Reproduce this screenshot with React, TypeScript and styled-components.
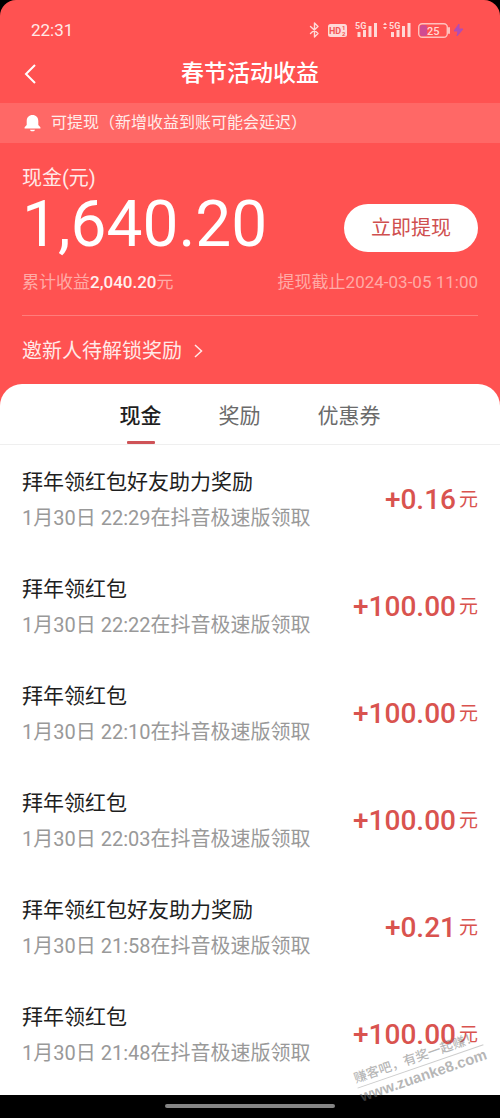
import React, { useState } from "react";
import styled, { createGlobalStyle } from "styled-components";

const GlobalStyle = createGlobalStyle`
  * { box-sizing: border-box; }
  html, body { margin: 0; background: #000; }
  body { font-family: Roboto, "Noto Sans CJK SC", sans-serif; }
  button { font-family: inherit; border: 0; padding: 0; background: none; cursor: pointer; }
  h1, h2, p, ul { margin: 0; padding: 0; font-weight: 400; }
`;

const Screen = styled.div`
  position: relative;
  display: flex;
  flex-direction: column;
  min-height: 100vh;
  overflow: hidden;
`;

const Hero = styled.header`
  background: #ff5251;
  color: #fff;
  border-radius: 16px 16px 0 0;
`;

const StatusBar = styled.div`
  display: flex;
  justify-content: space-between;
  align-items: center;
  height: 44px;
  padding: 16px 36px 0 31px;
  font-size: 17px;
  line-height: 26px;
  color: #ffe9e8;
`;

const StatusIcons = styled.svg`
  display: block;
  flex: none;
`;

const NavBar = styled.div`
  display: grid;
  grid-template-columns: 40px 1fr 40px;
  align-items: center;
  height: 59px;
  padding: 0 16px;
`;

const BackButton = styled.button`
  display: flex;
  padding-left: 6px;
  color: #fff;
`;

const PageTitle = styled.h1`
  text-align: center;
  font-size: 23px;
  line-height: 32px;
  font-weight: 500;
`;

const Notice = styled.div`
  display: flex;
  align-items: center;
  gap: 10px;
  height: 40px;
  padding: 0 24px;
  background: #ff6866;
  font-size: 16px;
  line-height: 24px;
  color: #ffecea;
`;

const Summary = styled.section`
  padding: 20px 22px 0;
`;

const SummaryLabel = styled.p`
  font-size: 20px;
  line-height: 30px;
  color: #ffe9e8;
`;

const BalanceRow = styled.div`
  display: flex;
  justify-content: space-between;
  align-items: flex-start;
  height: 68px;
`;

const Balance = styled.p`
  font-size: 64px;
  line-height: 64px;
`;

const WithdrawButton = styled.button`
  width: 134px;
  height: 48px;
  margin-top: 11px;
  border-radius: 24px;
  background: #fff;
  color: #cf4f4f;
  font-size: 20px;
  line-height: 48px;
`;

const TotalsRow = styled.div`
  display: flex;
  justify-content: space-between;
  margin-top: 9px;
  padding-bottom: 20px;
  border-bottom: 1px solid #ff7d7b;
  font-size: 17px;
  line-height: 25px;
  color: #ffaaa6;
`;

const Total = styled.strong`
  font-weight: 500;
  color: #fff0ef;
`;

const InviteLink = styled.a`
  display: flex;
  align-items: center;
  gap: 12px;
  height: 68px;
  padding-top: 2px;
  font-size: 20px;
  line-height: 30px;
  color: #ffe9e8;
  text-decoration: none;
`;

const SheetBackdrop = styled.main`
  display: flex;
  flex: 1;
  background: #ff5251;
`;

const Sheet = styled.div`
  flex: 1;
  min-width: 0;
  border-radius: 22px 22px 0 0;
  background: #fff;
`;

const Tabs = styled.div`
  display: flex;
  justify-content: center;
  gap: 57px;
  height: 61px;
  border-bottom: 1px solid #efefef;
`;

const Tab = styled.button<{ $active: boolean }>`
  display: flex;
  flex-direction: column;
  align-items: center;
  justify-content: space-between;
  padding-top: 16px;
  font-size: 21px;
  line-height: 32px;
  font-weight: ${(p) => (p.$active ? 500 : 400)};
  color: ${(p) => (p.$active ? "#1e1e1e" : "#6b6b6b")};

  &::after {
    content: "";
    width: 28px;
    height: 3px;
    border-radius: 1px;
    background: ${(p) => (p.$active ? "#cf5357" : "transparent")};
  }
`;

const RecordList = styled.ul`
  padding-top: 1px;
  list-style: none;
`;

const Record = styled.li`
  display: flex;
  justify-content: space-between;
  align-items: center;
  height: 107px;
  padding: 0 22px;
`;

const RecordTitle = styled.h2`
  font-size: 21px;
  line-height: 36px;
  color: #1e1e1e;
`;

const RecordTime = styled.p`
  font-size: 20px;
  line-height: 36px;
  color: #999;
`;

const Amount = styled.p`
  display: flex;
  align-items: center;
  gap: 3px;
  font-size: 28px;
  line-height: 36px;
  font-weight: 500;
  color: #d9534f;
`;

const Unit = styled.span`
  font-size: 19px;
  font-weight: 400;
`;

const SystemBar = styled.footer`
  display: flex;
  justify-content: center;
  height: 23px;
  padding-top: 9px;
  background: #000;
`;

const HomeIndicator = styled.div`
  width: 34%;
  height: 4px;
  border-radius: 2px;
  background: #858585;
`;

const Watermark = styled.div`
  position: absolute;
  right: 13px;
  bottom: 33px;
  transform: rotate(-19deg);
  font-size: 13px;
  line-height: 18px;
  font-weight: 500;
  color: rgba(110, 110, 110, 0.5);
  white-space: nowrap;
  pointer-events: none;
`;

const WatermarkName = styled.div`
  border-bottom: 1px solid rgba(110, 110, 110, 0.35);
`;

const WatermarkSite = styled.div`
  font-family: "Liberation Sans", sans-serif;
  font-size: 15px;
  font-weight: 700;
`;

const records = [
  { title: "拜年领红包好友助力奖励", time: "22:29", amount: "+0.16" },
  { title: "拜年领红包", time: "22:22", amount: "+100.00" },
  { title: "拜年领红包", time: "22:10", amount: "+100.00" },
  { title: "拜年领红包", time: "22:03", amount: "+100.00" },
  { title: "拜年领红包好友助力奖励", time: "21:58", amount: "+0.21" },
  { title: "拜年领红包", time: "21:48", amount: "+100.00" },
];

const tabs = ["现金", "奖励", "优惠券"];

function DeviceStatus() {
  return (
    <StatusIcons width="158" height="20" viewBox="0 0 158 20" fill="none" aria-hidden="true">
      <path d="M4.500 6.500l7.500 7-3.500 3.500V3l3.500 3.500-7.500 7" stroke="#ffd9d7" strokeWidth="1.400" strokeLinejoin="round" strokeLinecap="round" />
      <rect x="22" y="4" width="19" height="13" rx="2.500" fill="#ffd9d7" />
      <g fill="#f25554" fontFamily="Roboto, sans-serif" fontWeight="700">
        <text x="23" y="14" fontSize="9">HD</text>
        <text x="36" y="10" fontSize="6">1</text>
        <text x="36" y="16" fontSize="6">2</text>
      </g>
      <g fill="#ffd9d7">
        <text x="49" y="9" fontSize="9" fontWeight="700" fontFamily="Roboto, sans-serif">5G</text>
        <path d="M51.500 12h3v5h-3zM57 10h3v7h-3zM62.500 6h3v11h-3zM68 3h3v14h-3z" />
        <path d="M77 5l2-2.500 2 2.500zM77 7l2 2.500 2-2.500z" />
        <text x="83" y="9" fontSize="9" fontWeight="700" fontFamily="Roboto, sans-serif">5G</text>
        <path d="M85 12h3v5h-3zM90.500 10h3v7h-3zM96 6h3v11h-3zM101.500 3h3v14h-3z" />
      </g>
      <rect x="114" y="5" width="7" height="11" rx="2" fill="#d04b91" />
      <rect x="112.700" y="3.700" width="28.600" height="13.600" rx="3.500" stroke="#ffc0bd" strokeWidth="1.400" />
      <path d="M143 8v5" stroke="#ffc0bd" strokeWidth="2" strokeLinecap="round" />
      <text x="121" y="14.500" fontSize="11" fontWeight="500" fill="#ffd9d7" fontFamily="Roboto, sans-serif">25</text>
      <path d="M153 4l-5 7h4l-1 5 6-7h-4z" fill="#b14db5" stroke="#b14db5" strokeLinejoin="round" />
    </StatusIcons>
  );
}

export default function App() {
  const [active, setActive] = useState(0);

  return (
    <>
      <GlobalStyle />
      <Screen>
        <Hero>
          <StatusBar>
            <span>22:31</span>
            <DeviceStatus />
          </StatusBar>
          <NavBar>
            <BackButton aria-label="返回">
              <svg width="18" height="22" viewBox="0 0 18 22" fill="none" stroke="currentColor" strokeWidth="2">
                <path d="M13 2L4 11l9 9" />
              </svg>
            </BackButton>
            <PageTitle>春节活动收益</PageTitle>
          </NavBar>
          <Notice>
            <svg width="17" height="18" viewBox="0 0 17 18" fill="#fff" aria-hidden="true">
              <path d="M8.500 1C5 1 2.700 3.500 2.700 7v4L.6 13.200V14.500h15.800v-1.300L14.300 11V7c0-3.500-2.300-6-5.800-6zM6 15.700h5c-.3 1-1.200 1.600-2.500 1.600S6.300 16.700 6 15.700z" />
            </svg>
            <span>可提现（新增收益到账可能会延迟）</span>
          </Notice>
          <Summary>
            <SummaryLabel>现金(元)</SummaryLabel>
            <BalanceRow>
              <Balance>1,640.20</Balance>
              <WithdrawButton>立即提现</WithdrawButton>
            </BalanceRow>
            <TotalsRow>
              <span>累计收益<Total>2,040.20</Total>元</span>
              <span>提现截止2024-03-05 11:00</span>
            </TotalsRow>
            <InviteLink href="#invite">
              邀新人待解锁奖励
              <svg width="9" height="14" viewBox="0 0 9 14" fill="none" stroke="currentColor" strokeWidth="1.500" aria-hidden="true">
                <path d="M1 1l6.500 6L1 13" />
              </svg>
            </InviteLink>
          </Summary>
        </Hero>
        <SheetBackdrop>
          <Sheet>
            <Tabs role="tablist">
              {tabs.map((label, i) => (
                <Tab key={label} role="tab" aria-selected={i === active} $active={i === active} onClick={() => setActive(i)}>
                  {label}
                </Tab>
              ))}
            </Tabs>
            <RecordList>
              {records.map((r) => (
                <Record key={r.time}>
                  <div>
                    <RecordTitle>{r.title}</RecordTitle>
                    <RecordTime>1月30日 {r.time}在抖音极速版领取</RecordTime>
                  </div>
                  <Amount>
                    {r.amount}
                    <Unit>元</Unit>
                  </Amount>
                </Record>
              ))}
            </RecordList>
          </Sheet>
        </SheetBackdrop>
        <SystemBar>
          <HomeIndicator />
        </SystemBar>
        <Watermark aria-hidden="true">
          <WatermarkName>赚客吧，有奖一起赚！</WatermarkName>
          <WatermarkSite>www.zuanke8.com</WatermarkSite>
        </Watermark>
      </Screen>
    </>
  );
}
